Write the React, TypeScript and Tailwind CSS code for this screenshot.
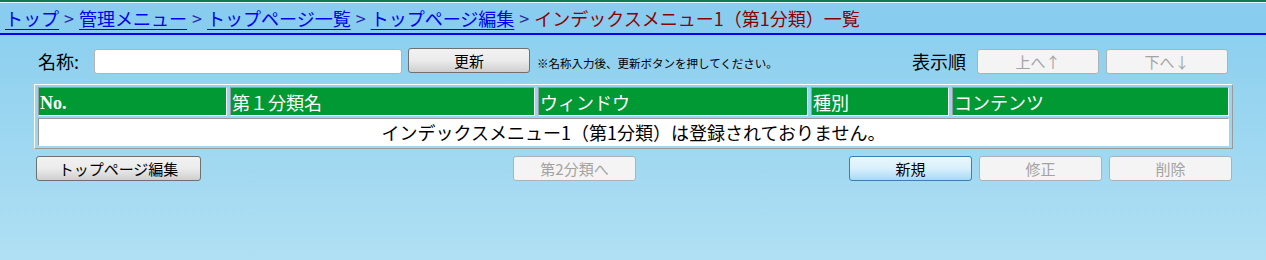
import React from 'react';

const jp = { fontFamily: '"MS UI Gothic", "Noto Sans CJK JP", sans-serif' };

function Btn({ label, kind = 'normal', className = '' }: { label: string; kind?: 'normal' | 'disabled' | 'active'; className?: string }) {
  const styles =
    kind === 'disabled'
      ? 'bg-[#f4f4f4] border-[#adb2b5] text-[#a3a3a3]'
      : kind === 'active'
        ? 'bg-gradient-to-b from-[#eaf6fd] via-[#d9f0fc] to-[#a7d9f5] border-[#3c7fb1] text-black'
        : 'bg-gradient-to-b from-[#f2f2f2] via-[#ebebeb] to-[#cfcfcf] border-[#707070] text-black';
  return (
    <button
      className={`h-[25px] border rounded-[3px] text-[15px] leading-none flex items-center justify-center ${styles} ${className}`}
      style={jp}
    >
      {label}
    </button>
  );
}

export default function App() {
  const headers = [
    { label: 'No.', w: 'w-[189px]', serif: true },
    { label: '第１分類名', w: 'w-[305px]' },
    { label: 'ウィンドウ', w: 'w-[270px]' },
    { label: '種別', w: 'w-[138px]' },
    { label: 'コンテンツ', w: 'w-[277px]' },
  ];

  return (
    <div className="w-[1266px] h-[260px] bg-gradient-to-b from-[#87cdee] to-[#b0e0f3] overflow-hidden" style={jp}>
      {/* top stripes */}
      <div className="h-[2px] bg-[#0f7a4f]" />
      <div className="h-[1px] bg-[#e8f6fb]" />

      {/* breadcrumb */}
      <div className="h-[30px] bg-[#88cdef] flex items-center pl-[5px] text-[18px] leading-none gap-[5px] text-[#2a2aa8]">
        <a className="text-[#0000ee] underline underline-offset-[3px]">トップ</a>
        <span>&gt;</span>
        <a className="text-[#0000ee] underline underline-offset-[3px]">管理メニュー</a>
        <span>&gt;</span>
        <a className="text-[#0000ee] underline underline-offset-[3px]">トップページ一覧</a>
        <span>&gt;</span>
        <a className="text-[#0000ee] underline underline-offset-[3px]">トップページ編集</a>
        <span>&gt;</span>
        <span className="text-[#8b0000]">インデックスメニュー1（第1分類）一覧</span>
      </div>
      <div className="h-[2px] bg-[#0000ee]" />

      <div className="px-[34px]">
        {/* name row */}
        <div className="flex items-center h-[41px] mt-[5px] pt-[1px]">
          <span className="ml-[4px] text-[18px] text-black w-[56px]">名称:</span>
          <input className="w-[308px] h-[25px] bg-white border border-[#b4b4b4] rounded-[3px] outline-none" />
          <Btn label="更新" className="ml-[6px] w-[122px] -mt-[2px]" />
          <span className="ml-[7px] mt-[6px] text-[11.5px] text-black">※名称入力後、更新ボタンを押してください。</span>
          <span className="ml-auto text-[18px] text-black mr-[11px]">表示順</span>
          <Btn label="上へ↑" kind="disabled" className="w-[122px]" />
          <Btn label="下へ↓" kind="disabled" className="ml-[7px] w-[122px] mr-[4px]" />
        </div>

        {/* table */}
        <table className="mt-[3px] w-[1199px] table-fixed border-separate border-spacing-x-[3px] border-spacing-y-[2px] border border-t-white border-l-white border-r-[#9a9a9a] border-b-[#9a9a9a]">
          <thead>
            <tr>
              {headers.map((h) => (
                <th
                  key={h.label}
                  className={`${h.w} h-[29px] p-0 pl-[1px] text-left font-normal leading-[22px] text-white text-[18px] bg-[#009933] border border-t-[#9a9a9a] border-l-[#9a9a9a] border-r-white border-b-white`}
                >
                  {h.serif ? (
                    <span className="font-bold" style={{ fontFamily: '"Liberation Serif", serif' }}>
                      {h.label}
                    </span>
                  ) : (
                    h.label
                  )}
                </th>
              ))}
            </tr>
          </thead>
          <tbody>
            <tr>
              <td
                colSpan={5}
                className="h-[28px] p-0 text-center leading-[22px] text-[18px] text-black bg-white border border-t-[#9a9a9a] border-l-[#9a9a9a] border-r-white border-b-white"
              >
                インデックスメニュー1（第1分類）は登録されておりません。
              </td>
            </tr>
          </tbody>
        </table>

        {/* bottom buttons */}
        <div className="flex items-center mt-[7px]">
          <Btn label="トップページ編集" className="ml-[2px] w-[165px]" />
          <Btn label="第2分類へ" kind="disabled" className="ml-[312px] w-[123px]" />
          <Btn label="新規" kind="active" className="ml-[213px] w-[123px]" />
          <Btn label="修正" kind="disabled" className="ml-[7px] w-[123px]" />
          <Btn label="削除" kind="disabled" className="ml-[7px] w-[123px]" />
        </div>
      </div>
    </div>
  );
}
